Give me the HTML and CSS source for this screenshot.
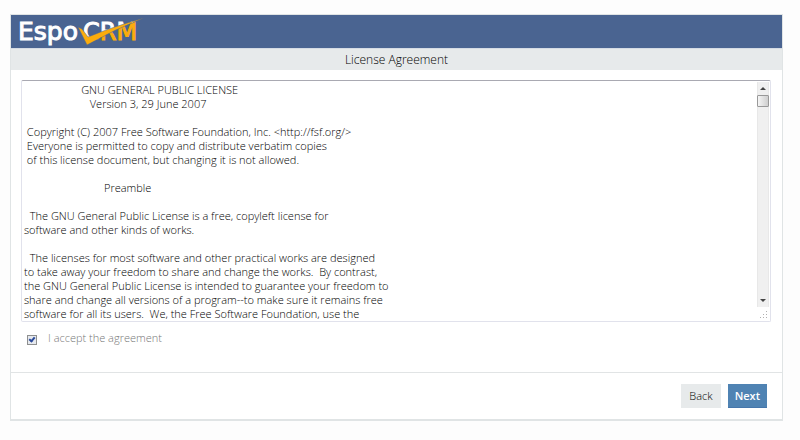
FILE: index.html
```html
<!DOCTYPE html>
<html lang="en">
<head>
  <meta charset="utf-8">
  <meta name="viewport" content="width=device-width, initial-scale=1">
  <title>EspoCRM Installation</title>
  <link rel="stylesheet" href="styles.css">
</head>
<body>
  <div class="panel">
    <header class="navbar">
      <svg class="logo" width="134" height="32" viewBox="0 0 134 32" role="img" aria-label="EspoCRM">
        <defs>
          <linearGradient id="crm" gradientUnits="userSpaceOnUse" x1="102" y1="8.4" x2="106" y2="19.6">
            <stop offset="0.5" stop-color="#fff"/>
            <stop offset="0.5" stop-color="#fbac0c"/>
          </linearGradient>
        </defs>
        <text class="logo-text" x="7" y="25" fill="#fff" stroke="#fff">Espo</text>
        <text class="logo-text small" x="72" y="25" fill="url(#crm)" stroke="url(#crm)">CRM</text>
        <path d="M67 12 L71 14 L77 22 Q101 12 133 3 Q104 14 76 30 Z" fill="#fbac0c" stroke="#4a6491" stroke-width="0.5"/>
      </svg>
    </header>
    <h1 class="title">License Agreement</h1>
    <form class="install">
      <div class="content">
        <div class="license">
          <textarea class="license-text" aria-label="License" readonly>
                    GNU GENERAL PUBLIC LICENSE
                       Version 3, 29 June 2007

 Copyright (C) 2007 Free Software Foundation, Inc. &lt;http://fsf.org/&gt;
 Everyone is permitted to copy and distribute verbatim copies
 of this license document, but changing it is not allowed.

                            Preamble

  The GNU General Public License is a free, copyleft license for
software and other kinds of works.

  The licenses for most software and other practical works are designed
to take away your freedom to share and change the works.  By contrast,
the GNU General Public License is intended to guarantee your freedom to
share and change all versions of a program--to make sure it remains free
software for all its users.  We, the Free Software Foundation, use the</textarea>
          <div class="scrollbar" aria-hidden="true">
            <svg class="arrow" width="12" height="12"><path d="M3 8 L6 5 L9 8 Z" fill="#444"/></svg>
            <div class="thumb"></div>
            <svg class="arrow last" width="12" height="12"><path d="M3 4 L6 7 L9 4 Z" fill="#444"/></svg>
          </div>
          <svg class="grip" width="8" height="8" aria-hidden="true">
            <path d="M6 0h1v1h-1z M6 3h1v1h-1z M6 6h1v1h-1z M3 3h1v1h-1z M3 6h1v1h-1z M0 6h1v1h-1z" fill="#b0b0b0"/>
          </svg>
        </div>
        <label class="accept"><input type="checkbox" name="license-agree" checked> I accept the agreement</label>
      </div>
      <footer class="buttons">
        <button type="button" class="btn">Back</button>
        <button type="button" class="btn btn-primary">Next</button>
      </footer>
    </form>
  </div>
</body>
</html>
```

FILE: styles.css
```css
* {box-sizing: border-box;}
body {margin: 14px 17px 20px 10px; background: #fdfdfd; color: #000; font: 300 11px/14px "Open Sans", sans-serif;}
.panel {background: #fff; border: 1px solid #e0e4e5; border-bottom-width: 2px; box-shadow: 0 1px 1px #eef0f1;}

.navbar {height: 34px; background: #4a6491; border-bottom: 1px solid #d5dbe4;}
.logo {display: block; overflow: visible;}
.logo-text {font: 25px "DejaVu Sans", sans-serif; stroke-width: 1px;}
.logo-text.small {font-size: 24px;}

.title {margin: 0; padding: 1px 0; background: #e7eaeb; font-size: 12px; font-weight: 300; line-height: 19px; text-align: center;}

.content {padding: 10px 11px 27px 10px;}
.license {position: relative;}
.license-text {display: block; width: 100%; height: 242px; margin: 0; padding: 2px 16px 0 2px; border: 1px solid #e1e2ec; border-top-color: #a9a9b2; border-radius: 2px; background: #fff; color: #000; font: inherit; resize: none; overflow: hidden; outline: none;}

.scrollbar {position: absolute; top: 2px; right: 2px; bottom: 15px; width: 12px; display: flex; flex-direction: column; background: #f0f0f0; border: 1px solid #e8e8e8; border-width: 0 1px;}
.arrow {display: block; margin-left: -1px;}
.arrow.last {margin-top: auto;}
.thumb {height: 12px; margin: 1px -1px; border: 1px solid #999; border-radius: 1px; background: linear-gradient(to right, #f5f5f5, #cfcfcf);}
.grip {position: absolute; right: 3px; bottom: 3px;}

.accept {display: flex; align-items: center; gap: 11px; margin-top: 9px; padding-left: 6px; color: #777;}
.accept input {appearance: none; width: 10px; height: 10px; margin: 3px 0 0; border: 1px solid #8e8f8f; background: #e6e9ee; position: relative;}
.accept input:checked::after {content: ""; position: absolute; left: 2px; top: 0; width: 2px; height: 4px; border: solid #2b4a9b; border-width: 0 2px 2px 0; transform: rotate(40deg);}

.buttons {display: flex; justify-content: flex-end; gap: 7px; padding: 11px 15px 11px; border-top: 1px solid #e1e4e5;}
.btn {height: 24px; padding: 0 8px; border: 0; background: #e7eaeb; color: #000; font: inherit;}
.btn-primary {padding: 0 7px; background: #4f83b3; border-bottom: 1px solid #4576ab; color: #fff; font-weight: 600;}
```
